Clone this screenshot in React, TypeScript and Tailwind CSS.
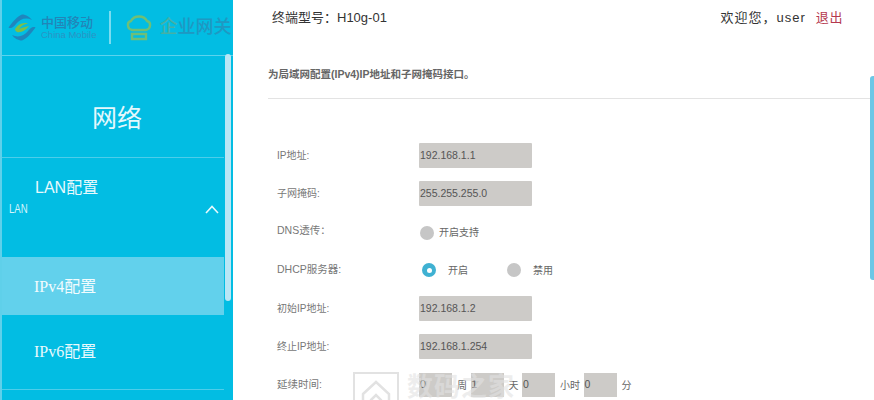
import React from 'react';

const font = { fontFamily: '"Liberation Sans", "Noto Sans CJK SC", sans-serif' };
const serif = { fontFamily: '"Liberation Serif", "Noto Sans CJK SC", serif' };

const Field: React.FC<{ label: string; value: string }> = ({ label, value }) => (
    <div className="flex items-center h-[25px]">
        <span className="w-[142px] text-[10px] text-[#777]">{label}</span>
        <div className="w-[113px] h-[25px] bg-[#cdcbc8] rounded-[1px] flex items-center text-[10.5px] text-[#555] pl-px">{value}</div>
    </div>
);

const Radio: React.FC<{ on?: boolean; label: string; gap: string; className?: string }> = ({ on, label, gap, className }) => (
    <div className={`flex items-center ${className ?? ''}`}>
        {on ? (
            <span className="w-[14px] h-[14px] rounded-full bg-[#3fb1d2] flex items-center justify-center">
                <span className="w-[5px] h-[5px] rounded-full bg-white"></span>
            </span>
        ) : (
            <span className="w-[14px] h-[14px] rounded-full bg-[#c6c6c6]"></span>
        )}
        <span className={`${gap} text-[10px] text-[#666]`}>{label}</span>
    </div>
);

const SmallBox: React.FC<{ value: string; unit: string }> = ({ value, unit }) => (
    <div className="flex items-center">
        <div className="w-[33px] h-[24px] bg-[#cdcbc8] flex items-center text-[10.5px] text-[#555] pl-px">{value}</div>
        <span className="ml-[5px] mr-[3.5px] text-[10px] text-[#666]">{unit}</span>
    </div>
);

const App: React.FC = () => {
    return (
        <div className="relative flex w-[874px] h-[400px] overflow-hidden bg-white" style={font}>
            {/* Sidebar */}
            <aside className="relative w-[233px] h-full shrink-0 bg-[#02bde3] border-l-2 border-[#5fd0ea] flex flex-col overflow-hidden">
                <div className="h-[56px] shrink-0 border-b border-[#5bd3ee] flex items-center pl-[6px] whitespace-nowrap">
                    <svg width="28" height="27" viewBox="0 0 28 27" fill="none" className="shrink-0">
                        <path d="M0.5 13.5C5 7 10 2 14 0.5C18 0.5 22 3 24 6C18 3 12 5 8 10C6 13 3 15 0.5 13.5Z" fill="#1f86bd" />
                        <path d="M27.5 13.5C23 20 18 25 14 26.5C10 26.5 6 24 4 21C10 24 16 22 20 17C22 14 25 12 27.5 13.5Z" fill="#1f86bd" />
                        <path d="M7 15C10 10 15 8 20 9.5C16 10 13 12 11 15C13 14 17 13 21 12C18 16 13 19 9 18C8 17.5 7 16.5 7 15Z" fill="#7cc04b" />
                    </svg>
                    <div className="ml-[5px] shrink-0 flex flex-col text-[#2185b8]">
                        <span className="text-[13px] leading-[14px] font-medium">中国移动</span>
                        <span className="text-[9.5px] leading-[9px] text-[#2a93c4]">China Mobile</span>
                    </div>
                    <div className="ml-[13px] shrink-0 w-[2px] h-[33px] bg-[#7adcf0]"></div>
                    <svg className="ml-[15px] shrink-0" width="26" height="27" viewBox="0 0 26 27" fill="none" stroke="#6fbf76" strokeWidth="2.4">
                        <path d="M6 16C1 15 0.5 8 5 7C8 1 18 1 21 7C25.5 8 25 15 20 16Z" />
                        <path d="M6 20H20V25H6Z" />
                    </svg>
                    <span className="ml-[7px] shrink-0 text-[18px] font-medium text-[#1f98c2]">
                        <span className="text-[#45b0a6]">企</span>业网关
                    </span>
                </div>
                <div className="h-[102px] shrink-0 mr-[9px] border-b border-[#4dcdea] flex items-center justify-center pt-[25px] pl-[8px] text-[25px] text-[#e4f8fc]">
                    网络
                </div>
                <div className="h-[99px] shrink-0 mr-[9px]">
                    <div className="pl-[33px] pt-[20px] text-[16px] leading-[20px] text-[#e8f9fd]">LAN配置</div>
                    <div className="flex items-center justify-between pl-[7px] pr-[5px] mt-[2px]">
                        <span className="text-[12px] scale-x-[0.8] origin-left text-[#d6f4fb]">LAN</span>
                        <svg width="14" height="9" viewBox="0 0 14 9" fill="none" stroke="#e8f9fd" strokeWidth="1.6">
                            <path d="M1 8L7 1.5L13 8" />
                        </svg>
                    </div>
                </div>
                <div className="h-[58px] shrink-0 mr-[9px] bg-[#62d1ec] flex items-center pl-[32px] pt-px text-[16px] text-[#f2fcfe]" style={serif}>
                    IPv4配置
                </div>
                <div className="h-[75px] shrink-0 mr-[9px] border-b border-[#4dcdea] flex items-center pl-[32px] text-[16px] text-[#e8f9fd]" style={serif}>
                    IPv6配置
                </div>
                {/* sidebar scrollbar */}
                <div className="absolute left-[223px] top-[54px] w-[6px] h-[247px] rounded-[3px] bg-[#b9e6f5]"></div>
            </aside>

            {/* Main */}
            <main className="flex-1 flex flex-col pl-[35px]">
                <div className="flex items-center justify-between h-[35px] pl-[4px] pr-[31px]">
                    <span className="text-[13px] text-[#333]">终端型号：H10g-01</span>
                    <span className="text-[13px] tracking-[1px] text-[#333]">
                        欢迎您，user<span className="ml-[10px] tracking-[0.6px] text-[#b5394f]">退出</span>
                    </span>
                </div>
                <div className="h-[64px] border-b border-[#e3e3e3] mr-[4px] pt-[32px] text-[10.5px] font-bold text-[#666]">
                    为局域网配置(IPv4)IP地址和子网掩码接口。
                </div>
                <div className="flex flex-col pl-[9px] pt-[44px]">
                    <Field label="IP地址:" value="192.168.1.1" />
                    <div className="h-[13px]"></div>
                    <Field label="子网掩码:" value="255.255.255.0" />
                    <div className="flex items-center h-[14px] mt-[18px]">
                        <span className="w-[142px] text-[10.5px] text-[#777]">DNS透传：</span>
                        <Radio label="开启支持" gap="ml-[5px]" className="mt-[3px] ml-px" />
                    </div>
                    <div className="flex items-center h-[14px] mt-[25px]">
                        <span className="w-[145px] text-[10.5px] text-[#777]">DHCP服务器:</span>
                        <Radio on label="开启" gap="ml-[12px]" />
                        <Radio label="禁用" gap="ml-[12px]" className="ml-[39px]" />
                    </div>
                    <div className="h-[19px]"></div>
                    <Field label="初始IP地址:" value="192.168.1.2" />
                    <div className="h-[13px]"></div>
                    <Field label="终止IP地址:" value="192.168.1.254" />
                    <div className="h-[14px]"></div>
                    <div className="flex items-center h-[24px]">
                        <span className="w-[142px] text-[10.5px] text-[#777]">延续时间:</span>
                        <SmallBox value="0" unit="周" />
                        <SmallBox value="1" unit="天" />
                        <SmallBox value="0" unit="小时" />
                        <SmallBox value="0" unit="分" />
                    </div>
                </div>
            </main>

            {/* page scrollbar */}
            <div className="absolute left-[870px] top-[76px] w-[4px] h-[204px] rounded-l-[3px] bg-[#6cc7e6]"></div>

            {/* watermark */}
            <div className="absolute left-[353px] top-[372px] flex items-start pointer-events-none">
                <div className="w-[46px] h-[46px] border-2 border-[#e2e2e2] flex items-center justify-center">
                    <svg width="34" height="34" viewBox="0 0 34 34" fill="none" stroke="#e2e2e2" strokeWidth="2.5">
                        <path d="M4 16L17 4L30 16V32H4Z" />
                        <path d="M12 22L17 17L22 22V28H12Z" />
                    </svg>
                </div>
                <span className="ml-[8px] text-[26px] leading-[30px] font-bold tracking-[1px] text-[#e2e2e2]/60">数码之家</span>
            </div>
        </div>
    );
};

export default App;
